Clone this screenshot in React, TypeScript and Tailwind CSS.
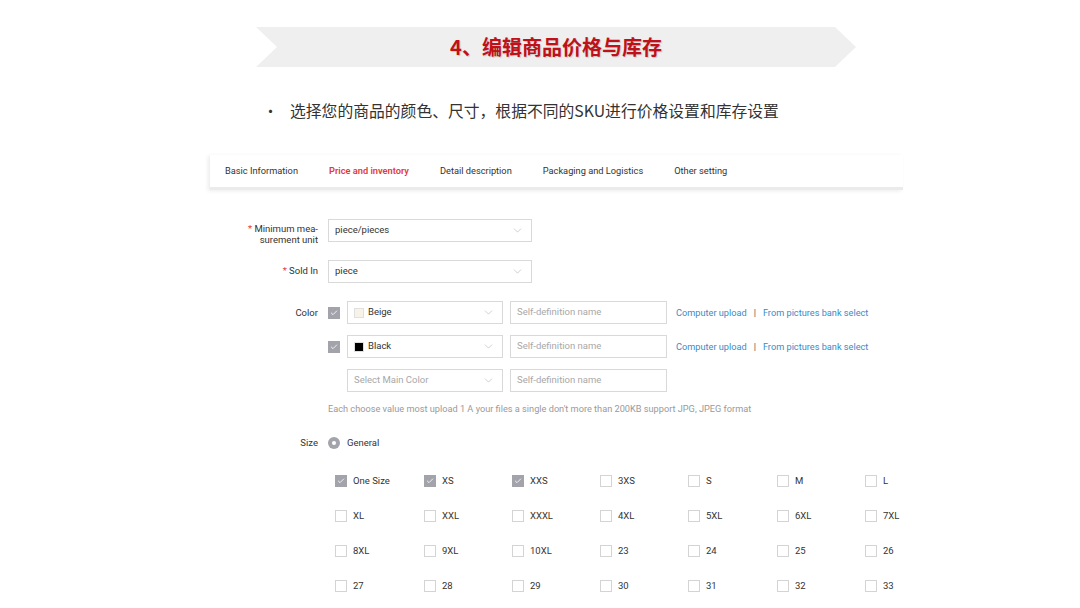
import { ChevronDown, Check } from "lucide-react";

const tabs = ["Basic Information", "Price and inventory", "Detail description", "Packaging and Logistics", "Other setting"];

const sizes = [
  ["One Size", "XS", "XXS", "3XS", "S", "M", "L"],
  ["XL", "XXL", "XXXL", "4XL", "5XL", "6XL", "7XL"],
  ["8XL", "9XL", "10XL", "23", "24", "25", "26"],
  ["27", "28", "29", "30", "31", "32", "33"],
];
const checkedSizes = ["One Size", "XS", "XXS"];

function Box({ checked }: { checked?: boolean }) {
  return checked ? (
    <span className="w-[12px] h-[12px] shrink-0 bg-[#a3a3ab] flex items-center justify-center">
      <Check className="w-[8px] h-[8px] text-white" strokeWidth={2.5} />
    </span>
  ) : (
    <span className="w-[12px] h-[12px] shrink-0 border border-[#d4d4d4] bg-white" />
  );
}

function Select({ children, width, placeholder }: { children: React.ReactNode; width: string; placeholder?: boolean }) {
  return (
    <div className={`${width} h-[23px] border border-[#d9d9d9] bg-white flex items-center justify-between pl-[6px] pr-[7px] text-[9.5px] ${placeholder ? "text-[#a8a8a8]" : "text-[#333]"}`}>
      <div className="flex items-center gap-[4px]">{children}</div>
      <ChevronDown className="w-[13px] h-[13px] text-[#a8a8a8]" strokeWidth={1} />
    </div>
  );
}

function ColorRow({ checked, swatch, name }: { checked?: boolean; swatch?: string; name?: string }) {
  return (
    <div className="flex items-center h-[23px]">
      <div className="w-[12px] mr-[7px]">{checked !== undefined && <Box checked={checked} />}</div>
      <Select width="w-[156px]" placeholder={!name}>
        {swatch && <span className={`w-[10px] h-[10px] border border-[#e0e0e0] ${swatch}`} />}
        <span>{name ?? "Select Main Color"}</span>
      </Select>
      <div className="w-[157px] h-[23px] ml-[7px] border border-[#d9d9d9] flex items-center px-[6px] text-[9.5px] text-[#a8a8a8]">
        Self-definition name
      </div>
      {name && (
        <div className="ml-[9px] flex items-center text-[9.2px] text-[#3a8cc6]">
          <span>Computer upload</span>
          <span className="mx-[7px] text-[#555]">|</span>
          <span>From pictures bank select</span>
        </div>
      )}
    </div>
  );
}

export default function App() {
  return (
    <div className="w-[1080px] h-[608px] bg-white overflow-hidden font-['Roboto','Noto_Sans_CJK_SC',sans-serif]">
      {/* title banner */}
      <div className="pt-[27px] pl-[256px]">
        <div className="w-[600px] h-[40px] bg-[#efefef] flex items-center justify-center [clip-path:polygon(0_0,579px_0,600px_50%,579px_100%,0_100%,21px_50%)]">
          <span className="text-[20px] font-bold text-[#c0101a] font-['Noto_Sans_CJK_SC',sans-serif] [text-shadow:1px_1px_1px_rgba(0,0,0,0.15)]">
            4、编辑商品价格与库存
          </span>
        </div>
      </div>

      <div className="mt-[34px] pl-[263px] flex items-center h-[20px] text-[15.8px] text-[#333] font-['Noto_Sans_CJK_SC',sans-serif]">
        <span className="w-[27px] text-[15px]">•</span>
        <span>选择您的商品的颜色、尺寸，根据不同的SKU进行价格设置和库存设置</span>
      </div>

      <div className="ml-[210px] w-[693px] mt-[34px]">
        {/* tabs */}
        <div className="h-[35px] bg-white border-b-[3px] border-[#ebebeb] shadow-[-2px_1px_4px_rgba(0,0,0,0.08)] flex items-center pl-[15px] gap-[31px] text-[9.25px] text-[#333]">
          {tabs.map((t, i) => (
            <span key={t} className={i === 1 ? "text-[#e4393c] font-semibold" : ""}>{t}</span>
          ))}
        </div>

        {/* form */}
        <div className="mt-[29px] h-[23px] flex items-start gap-[10px]">
          <div className="w-[108px] pt-[4px] text-right text-[9.5px] leading-[11px] text-[#333]">
            <span className="text-[#e4393c]">* </span>Minimum mea-<br />surement unit
          </div>
          <Select width="w-[204px]">
            <span>piece/pieces</span>
          </Select>
        </div>

        <div className="mt-[18px] flex items-center gap-[10px]">
          <div className="w-[108px] text-right text-[9.5px] text-[#333]">
            <span className="text-[#e4393c]">* </span>Sold In
          </div>
          <Select width="w-[204px]">
            <span>piece</span>
          </Select>
        </div>

        <div className="mt-[18px] flex gap-[10px]">
          <div className="w-[108px] text-right text-[9.5px] text-[#333] leading-[23px]">Color</div>
          <div className="flex flex-col gap-[11px]">
            <ColorRow checked swatch="bg-[#f7f3e6]" name="Beige" />
            <ColorRow checked swatch="bg-black" name="Black" />
            <ColorRow />
          </div>
        </div>

        <div className="mt-[10px] pl-[118px] text-[9.2px] text-[#9a9a9a] leading-[14px]">
          Each choose value most upload 1 A your files a single don't more than 200KB support JPG, JPEG format
        </div>

        <div className="mt-[20px] flex items-center gap-[10px] h-[14px]">
          <div className="w-[108px] text-right text-[9.5px] text-[#333]">Size</div>
          <div className="flex items-center gap-[7px]">
            <span className="w-[12px] h-[12px] rounded-full bg-[#a3a3ab] flex items-center justify-center">
              <span className="w-[4px] h-[4px] rounded-full bg-white" />
            </span>
            <span className="text-[9.5px] text-[#333]">General</span>
          </div>
        </div>

        <div className="ml-[118px] mt-[14px] pl-[7px] pt-[10px] flex flex-col gap-[23px]">
          {sizes.map((row, r) => (
            <div key={r} className="grid grid-cols-[89px_88px_88px_88px_89px_88px_1fr] h-[12px]">
              {row.map((s) => (
                <div key={s} className="flex items-center gap-[6px] text-[9.5px] text-[#333]">
                  <Box checked={checkedSizes.includes(s)} />
                  <span>{s}</span>
                </div>
              ))}
            </div>
          ))}
        </div>
      </div>
    </div>
  );
}
